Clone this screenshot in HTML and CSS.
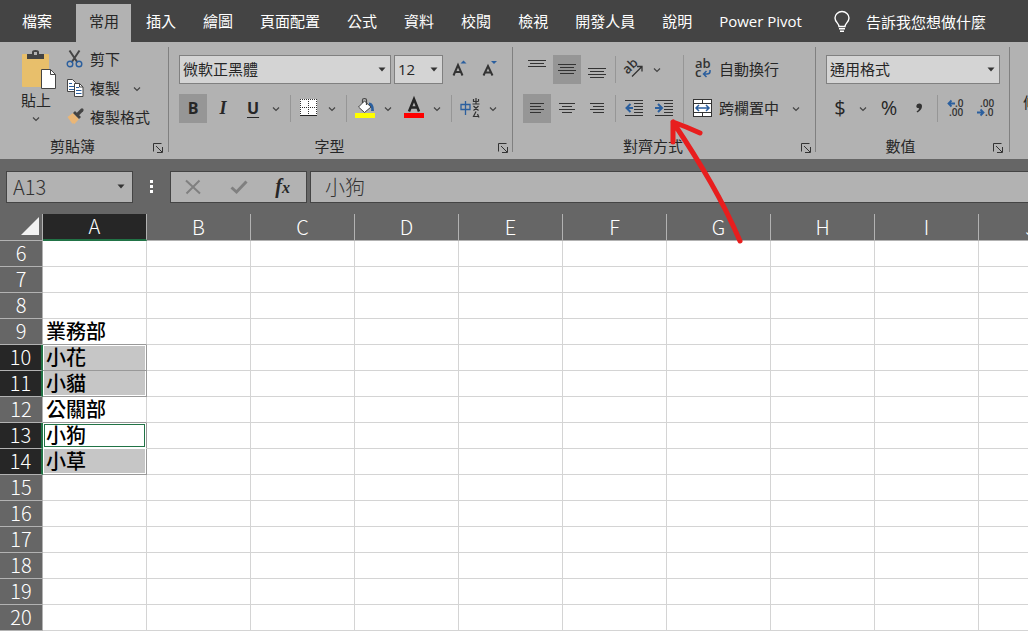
FILE: index.html
```html
<!DOCTYPE html>
<html lang="zh-Hant">

<head>
    <meta charset="UTF-8">
    <meta name="viewport" content="width=device-width, initial-scale=1.0">
    <title>Excel</title>
    <link rel="stylesheet" href="styles.css">
</head>

<body>

    <!-- Shared icons -->
    <svg class="icon-defs" aria-hidden="true">
        <symbol id="chevron" viewBox="0 0 8 6">
            <path d="M1 1.5l3 3 3-3" fill="none" stroke="#444" stroke-width="1.2"/>
        </symbol>
        <symbol id="caret" viewBox="0 0 8 5">
            <path d="M0.5 0.5h7L4 4.5z" fill="#333"/>
        </symbol>
        <symbol id="launcher" viewBox="0 0 10 10">
            <path d="M0.5 8.5v-8h8M3 3l6 6M9.5 4v5.5H4" fill="none" stroke="#333"/>
        </symbol>
    </svg>

    <nav class="tabs">
        <a class="tab file" href="#">檔案</a>
        <a class="tab active" href="#">常用</a>
        <a class="tab" href="#">插入</a>
        <a class="tab" href="#">繪圖</a>
        <a class="tab" href="#">頁面配置</a>
        <a class="tab" href="#">公式</a>
        <a class="tab" href="#">資料</a>
        <a class="tab" href="#">校閱</a>
        <a class="tab" href="#">檢視</a>
        <a class="tab" href="#">開發人員</a>
        <a class="tab" href="#">說明</a>
        <a class="tab" href="#">Power Pivot</a>
        <button class="tell-me">
            <svg width="16" height="22" viewBox="0 0 16 22" fill="none" stroke="#fff" stroke-width="1.4">
                <path d="M5 15.500c0-3-4-4.500-4-8.500a7 6.500 0 0 1 14 0c0 4-4 5.500-4 8.500z"/>
                <path d="M5 17.800h6M6 20.300h4"/>
            </svg>
            告訴我您想做什麼
        </button>
    </nav>

    <div class="ribbon">
        <section class="group clipboard">
            <div class="clipboard-tools">
                <button class="paste">
                    <svg width="40" height="40" viewBox="0 0 40 40">
                        <rect x="6" y="4" width="27" height="33" rx="1" fill="#e8bf6b"/>
                        <path d="M11 9V4h5V2q0-2 3.500-2T23 2v2h5v5z" fill="#444"/>
                        <rect x="18" y="2" width="3" height="3" fill="#b2b2b2"/>
                        <path d="M25.500 19.500h9l5 5v14h-14z" fill="#fff" stroke="#444"/>
                        <path d="M34.500 19.500v5h5" fill="none" stroke="#444"/>
                    </svg>
                    <span>貼上</span>
                    <svg class="chevron"><use href="#chevron"/></svg>
                </button>
                <div class="clipboard-list">
                    <button class="command">
                        <svg width="18" height="18" viewBox="0 0 18 18" fill="none">
                            <path d="M3.500 0.500l8 12M13.500 0.500l-8 12" stroke="#444" stroke-width="2"/>
                            <circle cx="4" cy="14" r="2.800" stroke="#2b5f9e" stroke-width="1.400"/>
                            <circle cx="13" cy="14" r="2.800" stroke="#2b5f9e" stroke-width="1.400"/>
                        </svg>
                        剪下
                    </button>
                    <div class="command-row">
                        <button class="command">
                            <svg width="18" height="18" viewBox="0 0 18 18">
                                <path d="M1.500 0.500h5l3 3v9h-8z" fill="#fff" stroke="#444"/>
                                <path d="M3 4.500h3M3 7.500h5M3 10.500h5" stroke="#2b5f9e"/>
                                <path d="M8.500 4.500h5l3.500 3.500v9.500h-8.500z" fill="#fff" stroke="#444"/>
                                <path d="M13.500 4.500v3.500h3.500" fill="none" stroke="#444"/>
                                <path d="M10 8.500h3M10 11.500h5.500M10 14.500h5.500" stroke="#2b5f9e"/>
                            </svg>
                            複製
                        </button>
                        <button class="drop" aria-label="複製選項"><svg class="chevron"><use href="#chevron"/></svg></button>
                    </div>
                    <button class="command">
                        <svg width="18" height="18" viewBox="0 0 18 18">
                            <path d="M7 5l6 6-4.500 5-1.500-1-0.500 1L1.500 9z" fill="#eab676"/>
                            <path d="M9 3l6 6-2 2-6-6z" fill="#444"/>
                            <path d="M11.500 6.500l4.500-4.500" stroke="#444" stroke-width="3.200" stroke-linecap="round"/>
                        </svg>
                        複製格式
                    </button>
                </div>
            </div>
            <footer class="group-footer">
                <span>剪貼簿</span>
                <button class="launcher" aria-label="剪貼簿設定"><svg width="10" height="10"><use href="#launcher"/></svg></button>
            </footer>
        </section>

        <div class="divider"></div>

        <section class="group">
            <div class="tools font-row">
                <div class="combo font-name">
                    <select aria-label="字型名稱"><option>微軟正黑體</option></select>
                    <svg class="caret"><use href="#caret"/></svg>
                </div>
                <div class="combo font-size">
                    <select aria-label="字型大小"><option>12</option></select>
                    <svg class="caret"><use href="#caret"/></svg>
                </div>
                <button class="tool" aria-label="放大字型">
                    <svg width="18" height="20" viewBox="0 0 18 20">
                        <path d="M2.500 16.500L7 6l4.500 10.500M4 13h6" fill="none" stroke="#333" stroke-width="2"/>
                        <path d="M9.500 4.500h6L12.500 1.500z" fill="#2b5f9e"/>
                    </svg>
                </button>
                <button class="tool" aria-label="縮小字型">
                    <svg width="18" height="20" viewBox="0 0 18 20">
                        <path d="M1.500 16.500L6 7l4.500 9.500M3 13.500h6" fill="none" stroke="#333" stroke-width="2"/>
                        <path d="M9 2h6L12 5z" fill="#2b5f9e"/>
                    </svg>
                </button>
            </div>
            <div class="tools">
                <button class="tool on bold">B</button>
                <button class="tool italic">I</button>
                <div class="split">
                    <button class="tool underline">U</button>
                    <button class="drop" aria-label="底線選項"><svg class="chevron"><use href="#chevron"/></svg></button>
                </div>
                <span class="sep"></span>
                <div class="split">
                    <button class="tool" aria-label="框線">
                        <svg width="18" height="18" viewBox="0 0 18 18">
                            <rect x="0" y="0" width="17" height="16" fill="#fff"/>
                            <path d="M0 0.500h17M0.500 0v16M8.500 0v16M16.500 0v16M0 8.500h17" stroke="#333" stroke-dasharray="1 1"/>
                            <path d="M0 16.500h17" stroke="#222"/>
                        </svg>
                    </button>
                    <button class="drop" aria-label="框線選項"><svg class="chevron"><use href="#chevron"/></svg></button>
                </div>
                <span class="sep"></span>
                <div class="split">
                    <button class="tool" aria-label="填滿色彩">
                        <svg width="20" height="20" viewBox="0 0 20 20">
                            <path d="M14 4.500q5 0 5 8.500h-3q1-4-2-6z" fill="#2b5f9e"/>
                            <path d="M9.500 3l6.500 6-6.500 5.500L3.500 9z" fill="#fff" stroke="#444"/>
                            <path d="M7.500 5V2q0-1.500 2-1.500t2 1.500v5" fill="none" stroke="#444" stroke-width="1.200"/>
                            <rect y="15" width="20" height="5" fill="#ff0"/>
                        </svg>
                    </button>
                    <button class="drop" aria-label="填滿色彩選項"><svg class="chevron"><use href="#chevron"/></svg></button>
                </div>
                <div class="split">
                    <button class="tool" aria-label="字型色彩">
                        <svg width="20" height="20" viewBox="0 0 20 20">
                            <path d="M5 13.500L10 1l5 12.500M7 9.500h6" fill="none" stroke="#262626" stroke-width="2.500"/>
                            <rect y="15" width="20" height="5" fill="#f00"/>
                        </svg>
                    </button>
                    <button class="drop" aria-label="字型色彩選項"><svg class="chevron"><use href="#chevron"/></svg></button>
                </div>
                <span class="sep"></span>
                <div class="split">
                    <button class="tool" aria-label="注音標示">
                        <svg width="20" height="20" viewBox="0 0 20 20" fill="none">
                            <path d="M1 6.500h9v5H1zM5.500 3v14" stroke="#2b5f9e" stroke-width="1.300"/>
                            <path d="M13.500 1v2.500h5M16 0v6M18.500 1v2.500M12.500 6h7M13.500 8l5 4.500M18.500 8l-5 4.500M16 13.500l-2.500 5h5M17.500 16l1.500 3.500" stroke="#333" stroke-width="1.200"/>
                        </svg>
                    </button>
                    <button class="drop" aria-label="注音標示選項"><svg class="chevron"><use href="#chevron"/></svg></button>
                </div>
            </div>
            <footer class="group-footer">
                <span>字型</span>
                <button class="launcher" aria-label="字型設定"><svg width="10" height="10"><use href="#launcher"/></svg></button>
            </footer>
        </section>

        <div class="divider"></div>

        <section class="group">
            <div class="align-tools">
                <div class="stack">
                    <div class="tools">
                        <button class="tool" aria-label="靠上對齊">
                            <svg class="lines" width="18" height="20" viewBox="0 0 18 20"><path d="M0 1.500h18M2 4.500h14M0 7.500h18"/></svg>
                        </button>
                        <button class="tool on" aria-label="置中對齊">
                            <svg class="lines" width="18" height="20" viewBox="0 0 18 20"><path d="M0 5.500h18M2 8.500h14M0 11.500h18M2 14.500h14"/></svg>
                        </button>
                        <button class="tool" aria-label="靠下對齊">
                            <svg class="lines" width="18" height="20" viewBox="0 0 18 20"><path d="M0 9.500h18M2 12.500h14M0 15.500h18M2 18.500h14"/></svg>
                        </button>
                        <span class="sep"></span>
                        <div class="split">
                            <button class="tool" aria-label="方向">
                                <svg width="20" height="20" viewBox="0 0 20 20">
                                    <text class="icon-text" x="7" y="11" text-anchor="middle" transform="rotate(-45 7 8)">ab</text>
                                    <path d="M8 17.500L18 7.500M13 7.500h5v5" fill="none" stroke="#333" stroke-width="1.300"/>
                                </svg>
                            </button>
                            <button class="drop" aria-label="方向選項"><svg class="chevron"><use href="#chevron"/></svg></button>
                        </div>
                    </div>
                    <div class="tools">
                        <button class="tool on" aria-label="靠左對齊">
                            <svg class="lines" width="18" height="20" viewBox="0 0 18 20"><path d="M2 5.500h14M2 8.500h11M2 11.500h14M2 14.500h11"/></svg>
                        </button>
                        <button class="tool" aria-label="水平置中">
                            <svg class="lines" width="18" height="20" viewBox="0 0 18 20"><path d="M1 5.500h16M4 8.500h10M1 11.500h16M4 14.500h10"/></svg>
                        </button>
                        <button class="tool" aria-label="靠右對齊">
                            <svg class="lines" width="18" height="20" viewBox="0 0 18 20"><path d="M2 5.500h14M5 8.500h11M2 11.500h14M5 14.500h11"/></svg>
                        </button>
                        <span class="sep"></span>
                        <button class="tool" aria-label="減少縮排">
                            <svg class="lines" width="18" height="20" viewBox="0 0 18 20">
                                <path d="M0 2.500h18M9 5.500h9M9 8.500h9M9 11.500h9M9 14.500h9M0 17.500h18"/>
                                <path class="blue" d="M8 10H2M5.500 6L1.500 10l4 4"/>
                            </svg>
                        </button>
                        <button class="tool" aria-label="增加縮排">
                            <svg class="lines" width="18" height="20" viewBox="0 0 18 20">
                                <path d="M0 2.500h18M9 5.500h9M9 8.500h9M9 11.500h9M9 14.500h9M0 17.500h18"/>
                                <path class="blue" d="M0 10h6M3 6l4 4-4 4"/>
                            </svg>
                        </button>
                    </div>
                </div>
                <span class="tall-sep"></span>
                <div class="stack wrap-tools">
                    <button class="command">
                        <svg width="20" height="20" viewBox="0 0 20 20">
                            <text class="icon-text" x="2" y="9">ab</text>
                            <text class="icon-text" x="2" y="18">c</text>
                            <path d="M17 11v1.500q0 2.500-3 2.500h-3M13.500 12l-3 3 3 3" fill="none" stroke="#2b5f9e" stroke-width="1.500"/>
                        </svg>
                        自動換行
                    </button>
                    <div class="split">
                        <button class="command">
                            <svg width="20" height="20" viewBox="0 0 20 20">
                                <rect x="0.500" y="1.500" width="18" height="17" fill="#fff" stroke="#333"/>
                                <path d="M0 5.500h19M0 14.500h19M9.500 1.500v4M9.500 14.500v4" stroke="#333"/>
                                <path d="M3 10h13M6 7l-3 3 3 3M13 7l3 3-3 3" fill="none" stroke="#2b5f9e" stroke-width="1.500"/>
                            </svg>
                            跨欄置中
                        </button>
                        <button class="drop" aria-label="跨欄置中選項"><svg class="chevron"><use href="#chevron"/></svg></button>
                    </div>
                </div>
            </div>
            <footer class="group-footer">
                <span>對齊方式</span>
                <button class="launcher" aria-label="對齊設定"><svg width="10" height="10"><use href="#launcher"/></svg></button>
            </footer>
        </section>

        <div class="divider"></div>

        <section class="group number">
            <div class="combo">
                <select aria-label="數值格式"><option>通用格式</option></select>
                <svg class="caret"><use href="#caret"/></svg>
            </div>
            <div class="tools">
                <div class="split">
                    <button class="tool symbol">$</button>
                    <button class="drop" aria-label="會計格式選項"><svg class="chevron"><use href="#chevron"/></svg></button>
                </div>
                <button class="tool symbol">%</button>
                <button class="tool" aria-label="千分位樣式">
                    <svg width="8" height="12" viewBox="0 0 8 12"><path d="M4 1.500a2.600 2.600 0 0 1 3 2.600q0 4-4.500 6.400l-1-1q2.500-1.500 2.700-3.300Q1.300 6.300 1.300 4 1.500 1.700 4 1.500z" fill="#333"/></svg>
                </button>
                <span class="sep"></span>
                <button class="tool" aria-label="增加小數位數">
                    <svg width="18" height="20" viewBox="0 0 18 20">
                        <text class="decimal" x="8" y="9">.0</text>
                        <text class="decimal" x="2" y="18">.00</text>
                        <path d="M8 5.500H2M4.500 2.500l-3 3 3 3" fill="none" stroke="#2b5f9e" stroke-width="1.800"/>
                    </svg>
                </button>
                <button class="tool" aria-label="減少小數位數">
                    <svg width="18" height="20" viewBox="0 0 18 20">
                        <text class="decimal" x="3" y="9">.00</text>
                        <text class="decimal" x="8" y="18">.0</text>
                        <path d="M0 14.500h6M3.500 11.500l3 3-3 3" fill="none" stroke="#2b5f9e" stroke-width="1.800"/>
                    </svg>
                </button>
            </div>
            <footer class="group-footer">
                <span>數值</span>
                <button class="launcher" aria-label="數值設定"><svg width="10" height="10"><use href="#launcher"/></svg></button>
            </footer>
        </section>

        <div class="divider"></div>

        <section class="group styles">
            <button class="command">條件式格式設定</button>
        </section>
    </div>

    <div class="formula-bar">
        <div class="box name-box">
            <input type="text" value="A13" aria-label="名稱方塊">
            <svg class="caret"><use href="#caret"/></svg>
        </div>
        <svg class="dots" width="3" height="14" viewBox="0 0 3 14" fill="#fff">
            <path d="M0 0h3v3H0zM0 5h3v3H0zM0 10h3v3H0z"/>
        </svg>
        <div class="box formula-actions">
            <button aria-label="取消">
                <svg width="18" height="18" viewBox="0 0 18 18"><path d="M2 2.500l14 13M15.500 2.500L2.500 15.500" stroke="#808080" stroke-width="2"/></svg>
            </button>
            <button aria-label="輸入">
                <svg width="18" height="18" viewBox="0 0 18 18"><path d="M1.500 9.500L6.500 14 16.500 3.500" fill="none" stroke="#808080" stroke-width="3"/></svg>
            </button>
            <button class="fx"><i>f</i><i class="sub">x</i></button>
        </div>
        <div class="box formula">
            <input type="text" value="小狗" aria-label="公式">
        </div>
    </div>

    <div class="sheet-view">
        <table class="sheet">
            <thead>
                <tr>
                    <th class="corner"><svg width="18" height="18" viewBox="0 0 18 18"><path d="M18 0v18H0z" fill="#f2f2f2"/></svg></th>
                    <th class="selected" scope="col">A</th>
                    <th scope="col">B</th>
                    <th scope="col">C</th>
                    <th scope="col">D</th>
                    <th scope="col">E</th>
                    <th scope="col">F</th>
                    <th scope="col">G</th>
                    <th scope="col">H</th>
                    <th scope="col">I</th>
                    <th scope="col">J</th>
                </tr>
            </thead>
            <tbody>
                <tr><th scope="row">6</th><td></td><td></td><td></td><td></td><td></td><td></td><td></td><td></td><td></td><td></td></tr>
                <tr><th scope="row">7</th><td></td><td></td><td></td><td></td><td></td><td></td><td></td><td></td><td></td><td></td></tr>
                <tr><th scope="row">8</th><td></td><td></td><td></td><td></td><td></td><td></td><td></td><td></td><td></td><td></td></tr>
                <tr class="before"><th scope="row">9</th><td>業務部</td><td></td><td></td><td></td><td></td><td></td><td></td><td></td><td></td><td></td></tr>
                <tr class="picked first"><th scope="row">10</th><td>小花</td><td></td><td></td><td></td><td></td><td></td><td></td><td></td><td></td><td></td></tr>
                <tr class="picked last"><th scope="row">11</th><td>小貓</td><td></td><td></td><td></td><td></td><td></td><td></td><td></td><td></td><td></td></tr>
                <tr class="before"><th scope="row">12</th><td>公關部</td><td></td><td></td><td></td><td></td><td></td><td></td><td></td><td></td><td></td></tr>
                <tr class="picked current"><th scope="row">13</th><td>小狗</td><td></td><td></td><td></td><td></td><td></td><td></td><td></td><td></td><td></td></tr>
                <tr class="picked last"><th scope="row">14</th><td>小草</td><td></td><td></td><td></td><td></td><td></td><td></td><td></td><td></td><td></td></tr>
                <tr><th scope="row">15</th><td></td><td></td><td></td><td></td><td></td><td></td><td></td><td></td><td></td><td></td></tr>
                <tr><th scope="row">16</th><td></td><td></td><td></td><td></td><td></td><td></td><td></td><td></td><td></td><td></td></tr>
                <tr><th scope="row">17</th><td></td><td></td><td></td><td></td><td></td><td></td><td></td><td></td><td></td><td></td></tr>
                <tr><th scope="row">18</th><td></td><td></td><td></td><td></td><td></td><td></td><td></td><td></td><td></td><td></td></tr>
                <tr><th scope="row">19</th><td></td><td></td><td></td><td></td><td></td><td></td><td></td><td></td><td></td><td></td></tr>
                <tr><th scope="row">20</th><td></td><td></td><td></td><td></td><td></td><td></td><td></td><td></td><td></td><td></td></tr>
            </tbody>
        </table>
    </div>

    <!-- Arrow pointing at the indent button -->
    <svg class="arrow" width="80" height="130" viewBox="0 0 80 130">
        <path d="M75 126Q62 96 46 68T8 7M8 27V7Q22 12 35 18" fill="none" stroke="#e81e1e" stroke-width="5" stroke-linecap="round" stroke-linejoin="round"/>
    </svg>

</body>

</html>
```

FILE: styles.css
```css
* {
    box-sizing: border-box;
}

body {
    font-family: "Open Sans", "Noto Sans CJK TC", sans-serif;
    font-size: 15px;
    line-height: 20px;
    color: #262626;
    background-color: #fff;
    margin: 0;
    height: 100vh;
    overflow: hidden;
    position: relative;
}

button, select, input {
    font: inherit;
    color: inherit;
    background: none;
    border: 0;
    padding: 0;
    margin: 0;
}

svg {
    display: block;
    flex: none;
    overflow: visible;
}

.icon-defs {
    position: absolute;
    width: 0;
    height: 0;
}

/* Tabs */
.tabs {
    display: flex;
    gap: 2px;
    background-color: #444;
    padding-top: 4px;
    white-space: nowrap;
}

.tab {
    padding: 7px 12px 11px 13px;
    color: #fff;
    text-decoration: none;
}

.tab.file {
    padding-left: 22px;
    padding-right: 22px;
}

.tab.active {
    background-color: #b2b2b2;
    color: #262626;
}

.tell-me {
    display: flex;
    align-items: center;
    gap: 16px;
    color: #fff;
    padding: 0 0 2px 18px;
    white-space: nowrap;
}

/* Ribbon */
.ribbon {
    display: flex;
    height: 117px;
    background-color: #b2b2b2;
    overflow: hidden;
    white-space: nowrap;
}

.group {
    flex: none;
    display: flex;
    flex-direction: column;
    gap: 10px;
    padding: 13px 7px 3px 10px;
}

.group.clipboard {
    gap: 0;
    padding: 3px 5px 3px 16px;
}

.group.number {
    padding-right: 9px;
}

.divider {
    flex: none;
    width: 1px;
    margin: 5px 0 7px;
    background-color: #808080;
}

.group-footer {
    display: flex;
    align-items: center;
    gap: 8px;
    margin: auto -3px 0 -10px;
    text-align: center;
}

.group-footer span {
    flex: 1;
}

.clipboard .group-footer {
    margin: auto 0 0 -16px;
}

.launcher {
    padding-top: 4px;
}

.chevron {
    width: 8px;
    height: 6px;
}

.caret {
    width: 8px;
    height: 5px;
}

.clipboard-tools {
    display: flex;
    gap: 10px;
    padding-right: 13px;
}

.paste {
    display: flex;
    flex-direction: column;
    align-items: center;
    width: 40px;
    padding-top: 5px;
}

.paste .chevron {
    margin-top: 6px;
}

.command {
    display: flex;
    align-items: center;
    gap: 6px;
    height: 29px;
    padding-bottom: 2px;
}

.command-row {
    display: flex;
    gap: 10px;
}

.tools {
    display: flex;
    align-items: center;
    gap: 2px;
    height: 29px;
}

.font-row {
    gap: 3px;
}

.tool {
    display: flex;
    align-items: center;
    justify-content: center;
    width: 28px;
    height: 29px;
    padding-bottom: 1px;
}

.tool.on {
    background-color: #969696;
}

.drop {
    display: flex;
    align-items: center;
    justify-content: center;
    width: 14px;
}

.split {
    display: flex;
    gap: 2px;
    margin-right: 3px;
}

.split:last-child {
    margin-right: 0;
}

.sep {
    width: 1px;
    height: 27px;
    margin: 0 2px;
    background-color: #969696;
}

.tall-sep {
    width: 1px;
    margin: 0 9px 0 5px;
    background-color: #969696;
}

.bold, .underline {
    font-weight: 700;
    font-size: 16px;
}

.italic {
    font-family: "Liberation Serif", serif;
    font-weight: 700;
    font-style: italic;
    font-size: 18px;
}

.underline {
    text-decoration: underline;
    text-underline-offset: 3px;
}

.symbol {
    font-size: 20px;
}

.combo {
    position: relative;
    height: 29px;
}

.combo select {
    appearance: none;
    width: 100%;
    height: 100%;
    padding: 0 20px 2px 3px;
    border: 1px solid #808080;
    border-radius: 0;
    background-color: #d4d4d4;
}

.combo .caret, .name-box .caret {
    position: absolute;
    right: 5px;
    top: 12px;
    pointer-events: none;
}

.font-name {
    width: 212px;
}

.font-size {
    width: 49px;
}

.align-tools {
    display: flex;
}

.stack {
    display: flex;
    flex-direction: column;
    gap: 10px;
}

.wrap-tools {
    padding-right: 5px;
}

.wrap-tools .split {
    gap: 10px;
}

.lines {
    fill: none;
    stroke: #333;
}

.lines .blue {
    stroke: #2b5f9e;
    stroke-width: 2;
}

.icon-text {
    font-size: 13px;
    font-weight: 600;
    fill: #333;
}

.decimal {
    font-size: 10px;
    font-weight: 600;
    fill: #333;
}

.styles {
    padding: 46px 0 0 13px;
}

/* Formula bar */
.formula-bar {
    display: flex;
    align-items: center;
    background-color: #666;
    padding: 12px 0 11px 6px;
}

.box {
    height: 32px;
    background-color: #b2b2b2;
    border: 1px solid #444;
}

.box input {
    width: 100%;
    height: 100%;
    padding-bottom: 2px;
    font-family: "Noto Sans CJK TC", sans-serif;
    font-weight: 300;
    font-size: 20px;
    color: #333;
}

.name-box {
    position: relative;
    width: 127px;
    padding-left: 6px;
}

.name-box .caret {
    right: 7px;
}

.dots {
    margin: 0 17px;
}

.formula-actions {
    display: flex;
    align-items: center;
    justify-content: space-between;
    width: 137px;
    padding: 0 16px 0 13px;
}

.formula {
    flex: 1;
    margin-left: 3px;
    padding-left: 14px;
    border-right: 0;
}

.fx {
    font-family: "Liberation Serif", serif;
    font-weight: 700;
    font-size: 20px;
}

.fx .sub {
    font-size: 16px;
}

/* Sheet */
.sheet-view {
    overflow: hidden;
}

.sheet {
    table-layout: fixed;
    width: 1083px;
    border-collapse: separate;
    border-spacing: 0;
    font-family: "Noto Sans CJK TC", sans-serif;
    font-size: 20px;
    line-height: 23px;
}

.sheet th {
    height: 26px;
    padding: 0 0 2px;
    font-weight: 300;
    color: #fff;
    background-color: #666;
    border-right: 1px solid #b2b2b2;
    border-bottom: 1px solid #b2b2b2;
}

.sheet thead th {
    height: 27px;
}

.sheet .corner {
    width: 43px;
}

.corner svg {
    margin-left: 21px;
}

.sheet .selected {
    background-color: #262626;
    border-bottom: 2px solid #217346;
}

.sheet td {
    height: 26px;
    padding: 0 0 2px 3px;
    font-weight: 500;
    color: #000;
    border-right: 1px solid #d4d4d4;
    border-bottom: 1px solid #d4d4d4;
}

.sheet .picked th {
    background-color: #262626;
    border-right: 2px solid #217346;
}

.sheet .before td:nth-child(2), .sheet .last td:nth-child(2) {
    border-bottom-color: #999;
}

.sheet .picked td:nth-child(2) {
    background-color: #c6c6c6;
    border-right-color: #999;
    border-bottom-color: #999;
    box-shadow: inset 1px 0 #fff, inset -1px 0 #fff;
}

.sheet .first td:nth-child(2) {
    box-shadow: inset 1px 1px #fff, inset -1px 0 #fff;
}

.sheet .last td:nth-child(2) {
    box-shadow: inset 1px 0 #fff, inset -1px -1px #fff;
}

.sheet .current td:nth-child(2) {
    background-color: #fff;
    border-bottom-color: #fff;
    box-shadow: inset 0 0 0 1px #fff, inset 0 0 0 2px #217346;
}

.arrow {
    position: absolute;
    left: 665px;
    top: 115px;
    pointer-events: none;
}
```
